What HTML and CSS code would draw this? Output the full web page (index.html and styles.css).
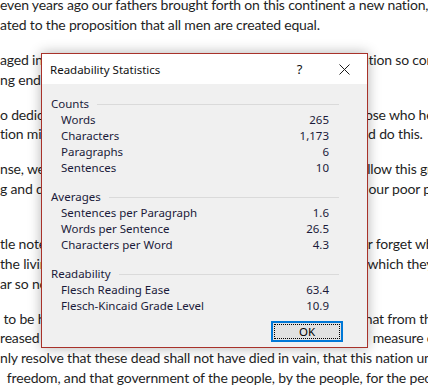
FILE: index.html
```html
<html>
  <head>
    <title>Readability Statistics</title>
    <link rel="stylesheet" href="styles.css">
  </head>

  <body>
    <div class="doc">
      <p>
        <span class="ln">even years ago our fathers brought forth on this continent a new nation,</span>
        <span class="ln">ated to the proposition that all men are created equal.</span>
      </p>
      <p>
        <span class="ln">aged in a great civil war, testing whether that nation, or any nation so conceived</span>
        <span class="ln">ng endure.</span>
      </p>
      <p>
        <span class="ln">o dedicate a portion of that field, as a final resting place for those who here gave</span>
        <span class="ln">tion might live. It is altogether fitting and proper that we should do this.</span>
      </p>
      <p>
        <span class="ln">nse, we cannot dedicate, we cannot consecrate, we cannot hallow this ground.</span>
        <span class="ln">g and dead, who struggled here have consecrated it far above our poor power</span>
        <span class="ln"> </span>
      </p>
      <p>
        <span class="ln">tle note, nor long remember what we say here, but it can never forget what they</span>
        <span class="ln">the living, rather, to be dedicated here to the unfinished work which they who</span>
        <span class="ln">ar so nobly advanced.</span>
      </p>
      <p>
        <span class="ln"> to be here dedicated to the great task remaining before us—that from these</span>
        <span class="ln">reased devotion to that cause for which they gave the last full  measure of</span>
        <span class="ln">nly resolve that these dead shall not have died in vain, that this nation under</span>
        <span class="ln">  freedom, and that government of the people, by the people, for the people,</span>
      </p>
    </div>

    <div class="dialog">
      <div class="titlebar">
        <span class="title">Readability Statistics</span>
        <span class="tb-btn">?</span>
        <span class="tb-btn">
          <svg width="11" height="11" viewBox="0 0 11 11">
            <path d="M0.5 0.5 L10.5 10.5 M10.5 0.5 L0.5 10.5" stroke="#1a1a1a" stroke-width="1" fill="none"/>
          </svg>
        </span>
      </div>

      <div class="dlg-body">
        <div class="group">
          <div class="group-head">Counts</div>
          <div class="row"><span>Words</span><span>265</span></div>
          <div class="row"><span>Characters</span><span>1,173</span></div>
          <div class="row"><span>Paragraphs</span><span>6</span></div>
          <div class="row"><span>Sentences</span><span>10</span></div>
        </div>

        <div class="group">
          <div class="group-head">Averages</div>
          <div class="row"><span>Sentences per Paragraph</span><span>1.6</span></div>
          <div class="row"><span>Words per Sentence</span><span>26.5</span></div>
          <div class="row"><span>Characters per Word</span><span>4.3</span></div>
        </div>

        <div class="group last">
          <div class="group-head">Readability</div>
          <div class="row"><span>Flesch Reading Ease</span><span>63.4</span></div>
          <div class="row"><span>Flesch-Kincaid Grade Level</span><span>10.9</span></div>
        </div>

        <div class="footer">
          <button class="ok"><span>OK</span></button>
        </div>
      </div>
    </div>
  </body>
</html>
```

FILE: styles.css
```css
html, body {
    margin: 0;
    padding: 0;
    background: #fff;
    overflow: hidden;
}

.doc {
    font-family: Lato, "Open Sans", sans-serif;
    font-size: 14px;
    line-height: 19.8px;
    color: #1f1f1f;
    letter-spacing: -0.17px;
    margin-top: -5px;
}

.doc p {
    margin: 0 0 15.2px 0;
}

.ln {
    display: block;
    white-space: pre;
    height: 19.8px;
}

/* dialog on top of the document */
.dialog {
    position: absolute;
    left: 41px;
    top: 53px;
    width: 325px;
    height: 293px;
    border: 1px solid #a8322a;
    background: #f0f0f0;
    box-shadow: 0 0 12px rgba(0, 0, 0, 0.3);
    font-family: "Noto Sans", sans-serif;
    font-size: 11.5px;
    color: #1b1b3a;
}

.titlebar {
    height: 30px;
    background: #fff;
    display: flex;
    align-items: center;
    padding-left: 8px;
}

.title {
    flex: 1;
    color: #111;
}

.tb-btn {
    width: 45px;
    height: 30px;
    display: flex;
    align-items: center;
    justify-content: center;
    font-size: 13px;
    color: #111;
}

.dlg-body {
    padding: 12px 28px 0 9px;
}

.group {
    margin-bottom: 13px;
}

.group.last {
    margin-bottom: 7px;
}

.group-head {
    display: flex;
    align-items: center;
    height: 16px;
    line-height: 16px;
}

.group-head::after {
    content: "";
    flex: 1;
    border-top: 1px solid #dadada;
    margin-left: 8px;
}

.row {
    display: flex;
    justify-content: space-between;
    height: 16px;
    line-height: 16px;
    padding: 0 10px;
}

.footer {
    display: flex;
    justify-content: flex-end;
    margin-right: -4px;
}

.ok {
    width: 72px;
    height: 21px;
    border: 2px solid #0078d7;
    background: #e1e1e1;
    padding: 1px;
    margin: 0;
    font: inherit;
    color: #000;
    box-sizing: border-box;
}

.ok span {
    display: flex;
    align-items: center;
    justify-content: center;
    height: 100%;
    border: 1px dotted #000;
    box-sizing: border-box;
}
```
